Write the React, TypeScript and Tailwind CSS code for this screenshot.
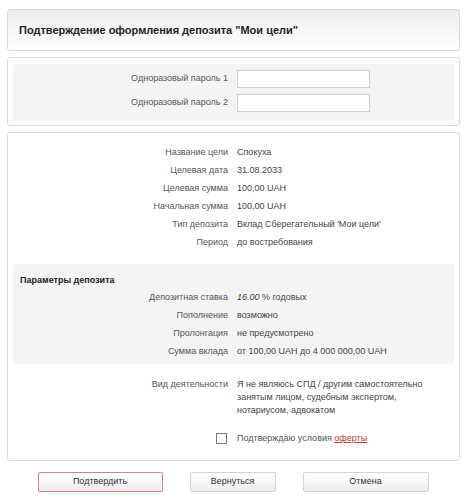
const font = { fontFamily: '"Liberation Sans", Arial, sans-serif' };

const Row = ({ label, children }: { label: string; children: React.ReactNode }) => (
  <div className="flex h-[18px] items-center">
    <div className="w-[229px] shrink-0 pr-[9px] text-right text-[#555]">{label}</div>
    <div className="text-[#444]">{children}</div>
  </div>
);

const Button = ({ label, width, accent }: { label: string; width: string; accent?: boolean }) => (
  <button
    className={`h-[20px] ${width} rounded-[2px] border bg-gradient-to-b from-white to-[#ececec] text-[9px] text-[#333] ${
      accent ? 'border-[#d28484]' : 'border-[#d4d4d4]'
    }`}
  >
    {label}
  </button>
);

export default function App() {
  return (
    <div className="w-[466px] bg-white pt-[9px] text-[9px]" style={font}>
      {/* Header */}
      <div className="ml-[7px] flex h-[42px] w-[453px] items-center rounded-[3px] border border-[#dcdcdc] bg-gradient-to-b from-[#ededed] to-white pl-[11px]">
        <h1 className="text-[11px] font-bold text-[#222]">Подтверждение оформления депозита "Мои цели"</h1>
      </div>

      {/* Passwords */}
      <div className="ml-[7px] mt-[6px] w-[453px] rounded-[3px] border border-[#dcdcdc] px-[5px] pb-[4px] pt-[6px]">
        <div className="flex flex-col gap-[6px] rounded-[2px] bg-[#f4f4f4] pb-[9px] pt-[6px]">
          {['Одноразовый пароль 1', 'Одноразовый пароль 2'].map((l) => (
            <div key={l} className="flex items-center">
              <div className="w-[224px] shrink-0 pr-[9px] text-right text-[#555]">{l}</div>
              <input className="h-[18px] w-[133px] border border-[#cfcfcf] bg-white outline-none" />
            </div>
          ))}
        </div>
      </div>

      {/* Details */}
      <div className="ml-[7px] mt-[6px] h-[329px] w-[453px] rounded-[3px] border border-[#dcdcdc] pt-[11px]">
        <Row label="Название цели">Спокуха</Row>
        <Row label="Целевая дата">31.08.2033</Row>
        <Row label="Целевая сумма">100,00 UAH</Row>
        <Row label="Начальная сумма">100,00 UAH</Row>
        <Row label="Тип депозита">Вклад Сберегательный 'Мои цели'</Row>
        <Row label="Период">до востребования</Row>

        <div className="mx-[5px] mt-[12px] rounded-[2px] bg-[#f4f4f4] pb-[3px] pt-[9px]">
          <div className="flex h-[16px] items-center pl-[7px] font-bold text-[#222]">Параметры депозита</div>
          <div className="-ml-[5px]">
            <Row label="Депозитная ставка">
              <i>16.00</i> % годовых
            </Row>
            <Row label="Пополнение">возможно</Row>
            <Row label="Пролонгация">не предусмотрено</Row>
            <Row label="Сумма вклада">от 100,00 UAH до 4 000 000,00 UAH</Row>
          </div>
        </div>

        <div className="mt-[14px] flex leading-[13px]">
          <div className="w-[229px] shrink-0 pr-[9px] text-right text-[#555]">Вид деятельности</div>
          <div className="w-[196px] text-[#444]">
            Я не являюсь СПД / другим самостоятельно занятым лицом, судебным экспертом, нотариусом, адвокатом
          </div>
        </div>

        <div className="mt-[15px] flex items-center">
          <div className="flex w-[229px] shrink-0 justify-end pr-[10px]">
            <span className="block h-[11px] w-[11px] border border-[#777] bg-white" />
          </div>
          <span className="text-[#555]">
            Подтверждаю условия{' '}
            <a href="#" className="text-[#c0392b] underline">
              оферты
            </a>
          </span>
        </div>
      </div>

      {/* Buttons */}
      <div className="mt-[11px] flex justify-center gap-[27px] pb-[8px]">
        <Button label="Подтвердить" width="w-[125px]" accent />
        <Button label="Вернуться" width="w-[86px]" />
        <Button label="Отмена" width="w-[126px]" />
      </div>
    </div>
  );
}
